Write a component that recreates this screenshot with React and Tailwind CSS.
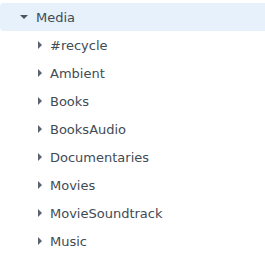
import React from "react";

const items = ["#recycle","Ambient","Books","BooksAudio","Documentaries","Movies","MovieSoundtrack","Music"];

function Right() {
  return (
    <svg width="4" height="8" viewBox="0 0 4 8" className="shrink-0"><path d="M0 0 L4 4 L0 8 Z" fill="#5a6470"/></svg>
  );
}
function Down() {
  return (
    <svg width="8" height="4" viewBox="0 0 8 4" className="shrink-0"><path d="M0 0 L8 0 L4 4 Z" fill="#4a545e"/></svg>
  );
}

export default function App() {
  return (
    <div className="w-[265px] h-[254px] bg-white pt-[3px] text-[13px] text-[#414b55]" style={{fontFamily: '"DejaVu Sans", Verdana, sans-serif'}}>
      <div className="h-[28px] flex items-center bg-[#e6f1fc] rounded-l-[4px] pl-[20px]">
        <Down />
        <span className="ml-[8px] mt-[2px]">Media</span>
      </div>
      {items.map((t) => (
        <div key={t} className="h-[28px] flex items-center pl-[38px]">
          <Right />
          <span className="ml-[8px] mt-[2px]">{t}</span>
        </div>
      ))}
    </div>
  );
}
